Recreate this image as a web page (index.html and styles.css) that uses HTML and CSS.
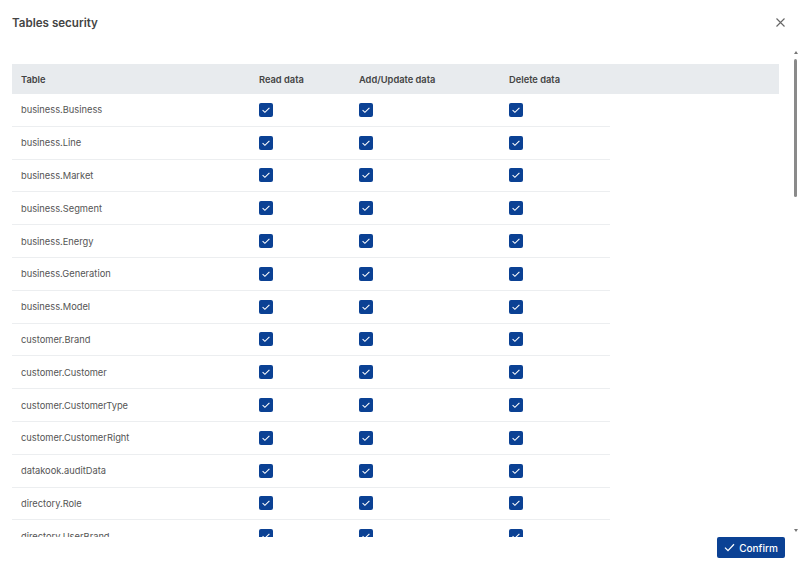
FILE: index.html
```html
<!DOCTYPE html>
<html>
<head>
<meta charset="utf-8">
<link rel="stylesheet" href="styles.css">
</head>
<body>
<div class="modal">
  <div class="head">
    <h1 class="title">Tables security</h1>
    <svg class="close" width="9" height="9" viewBox="0 0 9 9"><path d="M0.5 0.5L8.5 8.5M8.5 0.5L0.5 8.5" stroke="#666" stroke-width="1.1" fill="none"/></svg>
  </div>
  <div class="body">
    <div class="scroll">
      <div class="thead">
        <div class="th">Table</div>
        <div class="th">Read data</div>
        <div class="th">Add/Update data</div>
        <div class="th">Delete data</div>
      </div>
      <div class="tbody" id="tbody"></div>
    </div>
    <div class="sbar">
      <div class="arrow up"></div>
      <div class="thumb"></div>
      <div class="track"></div>
      <div class="arrow down"></div>
    </div>
  </div>
  <div class="foot">
    <button class="confirm"><svg width="11" height="9" viewBox="0 0 11 9"><path d="M1 4.6L4 7.6L10 1.2" stroke="#fff" stroke-width="1.3" fill="none"/></svg>Confirm</button>
  </div>
</div>
<script>
var names=["business.Business","business.Line","business.Market","business.Segment","business.Energy","business.Generation","business.Model","customer.Brand","customer.Customer","customer.CustomerType","customer.CustomerRight","datakook.auditData","directory.Role","directory.UserBrand"];
var cb='<span class="cb"><svg width="14" height="14" viewBox="0 0 14 14"><path d="M3.6 7.2L5.9 9.3L10.4 4.8" stroke="#fff" stroke-width="1.1" fill="none"/></svg></span>';
var h='';
names.forEach(function(n){h+='<div class="tr"><div class="td name">'+n+'</div><div class="td">'+cb+'</div><div class="td">'+cb+'</div><div class="td">'+cb+'</div></div>';});
document.getElementById('tbody').innerHTML=h;
</script>
</body>
</html>
```
FILE: styles.css
```css
* { box-sizing: border-box; }
html, body { margin: 0; padding: 0; background: #fff; }
body { font-family: Inter, "Noto Sans", sans-serif; color: #555; }
.modal { width: 798px; height: 566px; display: flex; flex-direction: column; overflow: hidden; }
.head { height: 48px; flex: none; display: flex; align-items: flex-start; justify-content: space-between; padding: 16px 13px 0 12px; }
.title { margin: 0; font-size: 11.6px; font-weight: 600; color: #444; line-height: 14px; }
.close { margin-top: 2px; }
.body { flex: 1; display: flex; min-height: 0; }
.scroll { flex: 1; overflow: hidden; padding: 16px 13px 0 12px; }
.thead { display: grid; grid-template-columns: 238px 100px 150px 1fr; height: 30px; background: #e8ebee; align-items: center; }
.th { font-size: 9.3px; font-weight: 600; color: #444; padding-left: 9px; }
.tbody { width: 598px; }
.tr { display: grid; grid-template-columns: 238px 100px 150px 1fr; height: 32.8px; border-bottom: 1px solid #eceef0; align-items: center; }
.td { padding-left: 9px; font-size: 9.3px; color: #555; display: flex; align-items: center; }
.cb { width: 14px; height: 14px; border-radius: 2px; background: #0b4194; display: block; }
.cb svg { display: block; }
.sbar { width: 6px; flex: none; display: flex; flex-direction: column; align-items: center; padding-top: 1px; margin-bottom: 5px; }
.arrow { width: 0; height: 0; border-left: 2.5px solid transparent; border-right: 2.5px solid transparent; margin-left: 1px; }
.arrow.up { border-bottom: 3px solid #777; margin-top: 2px; }
.arrow.down { border-top: 3px solid #777; }
.thumb { width: 3px; height: 138px; background: #8a8a8a; border-radius: 2px; margin: 5px 0 0 1px; }
.track { flex: 1; }
.foot { height: 29px; flex: none; display: flex; justify-content: flex-end; padding: 0 13px 0 0; }
.confirm { width: 68px; height: 21px; background: #0b4194; border: none; border-radius: 2px; color: #fff; font-family: Inter, sans-serif; font-size: 10px; font-weight: 500; display: flex; align-items: center; justify-content: center; gap: 4px; padding: 0; }
.confirm svg { display: block; }
```
